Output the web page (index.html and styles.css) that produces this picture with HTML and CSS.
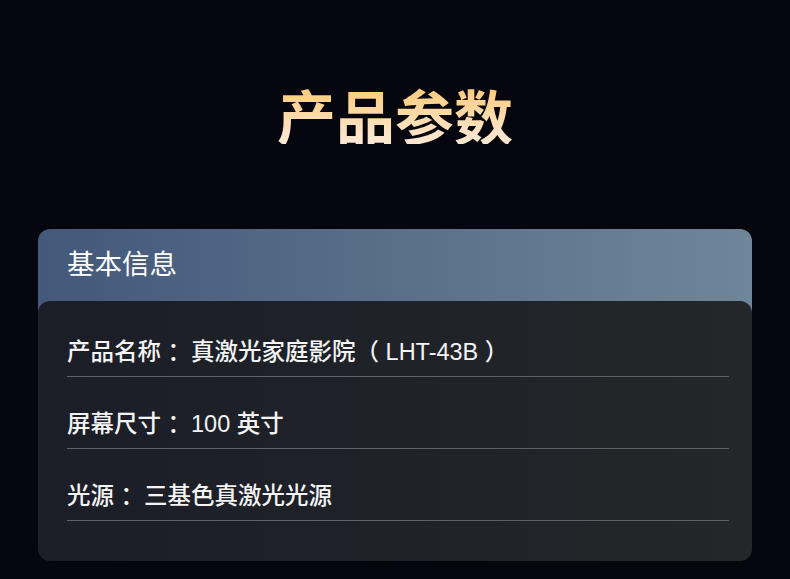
FILE: index.html
```html
<!DOCTYPE html>
<html lang="zh-CN">
<head>
<meta charset="utf-8">
<title>产品参数</title>
<link rel="stylesheet" href="styles.css">
</head>
<body>
<main class="page">
  <h1 class="title">产品参数</h1>
  <section class="card">
    <div class="card-head">基本信息</div>
    <div class="card-body">
      <div class="row">产品名称 ：真激光家庭影院（ LHT-43B ）</div>
      <div class="row">屏幕尺寸 ：100 英寸</div>
      <div class="row">光源 ：三基色真激光光源</div>
    </div>
  </section>
</main>
</body>
</html>
```

FILE: styles.css
```css
html, body {
  margin: 0;
  padding: 0;
  background: #05060e;
}

.page {
  width: 790px;
  height: 579px;
  overflow: hidden;
  padding-top: 85px;
  box-sizing: border-box;
  font-family: "Noto Sans CJK SC", "Noto Sans", sans-serif;
}

.title {
  margin: 0;
  text-align: center;
  font-size: 59px;
  line-height: 59px;
  font-weight: 700;
  background: linear-gradient(to bottom, #ffcd80 10%, #fde6cf 90%);
  -webkit-background-clip: text;
  background-clip: text;
  color: transparent;
}

.card {
  margin: 85px 38px 0;
}

.card-head {
  height: 84px;
  box-sizing: border-box;
  padding: 15px 29px 0;
  border-radius: 12px 12px 0 0;
  background: linear-gradient(to right, #43587a, #6f8699);
  color: #ffffff;
  font-size: 27.5px;
  line-height: 36px;
}

.card-body {
  margin-top: -12px;
  border-radius: 12px;
  background: linear-gradient(to right, #1b1e27, #242629);
  padding: 36px 23px 40px 29px;
  display: flex;
  flex-direction: column;
  gap: 32px;
}

.row {
  color: #f4f4f4;
  font-family: "Liberation Sans", "Noto Sans CJK SC", sans-serif;
  font-size: 23.5px;
  font-weight: 500;
  line-height: 30px;
  padding-bottom: 9px;
  border-bottom: 1px solid #606168;
  white-space: pre;
}
```
